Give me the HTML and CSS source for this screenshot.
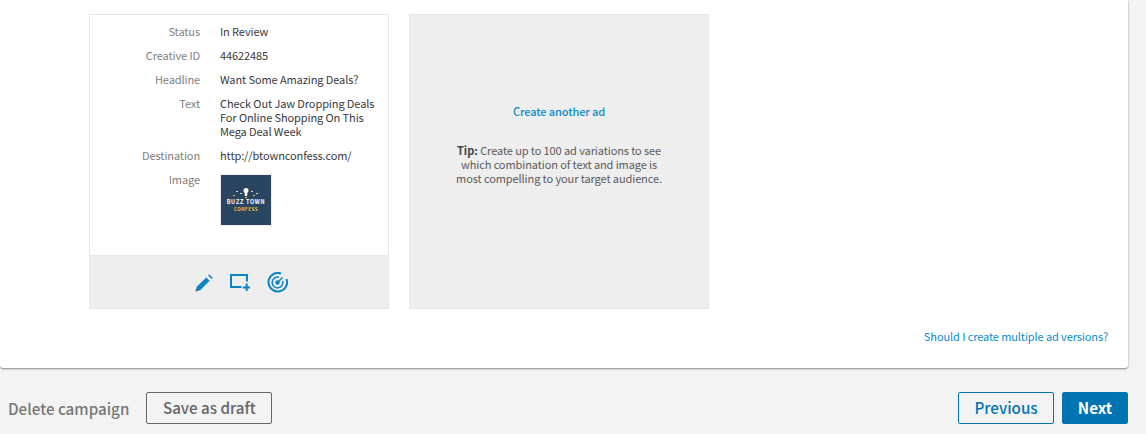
FILE: index.html
```html
<!DOCTYPE html>
<html lang="en">
<head>
<meta charset="utf-8">
<title>Ad versions</title>
<link rel="stylesheet" href="styles.css">
</head>
<body>
<main class="panel">
  <div class="cards">
    <section class="ad-card">
      <dl class="details">
        <div class="row"><dt>Status</dt><dd>In Review</dd></div>
        <div class="row"><dt>Creative ID</dt><dd>44622485</dd></div>
        <div class="row"><dt>Headline</dt><dd>Want Some Amazing Deals?</dd></div>
        <div class="row"><dt>Text</dt><dd>Check Out Jaw Dropping Deals For Online Shopping On This Mega Deal Week</dd></div>
        <div class="row"><dt>Destination</dt><dd>http://btownconfess.com/</dd></div>
        <div class="row"><dt>Image</dt><dd>
          <div class="thumb">
            <svg class="bulb" width="36" height="11" viewBox="0 0 36 11" aria-hidden="true">
              <path d="M18 0a2.500 2.500 0 0 1 2.500 2.500c0 1.300-1 2-1.300 3V8h-2.400V5.500c-.3-1-1.300-1.700-1.300-3A2.500 2.500 0 0 1 18 0z" fill="#fff"/>
              <rect x="8" y="3" width="2" height="1" fill="#cfd8e0"/>
              <rect x="12" y="5" width="2" height="1" fill="#cfd8e0"/>
              <rect x="23" y="3" width="2" height="1" fill="#cfd8e0"/>
              <rect x="28" y="5" width="2" height="1" fill="#cfd8e0"/>
              <rect x="5" y="7" width="2" height="1" fill="#e8c33a"/>
              <rect x="25" y="7" width="2" height="1" fill="#e8c33a"/>
              <rect x="17" y="9" width="2" height="1" fill="#e8c33a"/>
            </svg>
            <span class="thumb-title">BUZZ TOWN</span>
            <span class="thumb-sub">CONFESS</span>
          </div>
        </dd></div>
      </dl>
      <div class="actions">
        <svg class="icon" width="18" height="18" viewBox="0 0 18 18" aria-hidden="true">
          <path d="M0.500 17.500l1.200-4.700L11.300 3.400l3.300 3.300-9.400 9.600z" fill="#0c84c4"/>
          <path d="M13 1.200L14.200.3l3.500 3.400-1 1.300z" fill="#0c84c4"/>
          <path d="M0.500 17.500l.7-2.700 2 2z" fill="#6b5f6b"/>
        </svg>
        <svg class="icon" width="20" height="17" viewBox="0 0 20 17" aria-hidden="true">
          <path d="M11.500 13H1V1h16v6.500" fill="none" stroke="#0c84c4" stroke-width="2"/>
          <path d="M15.700 9.500h2v3h3v2h-3v2.500h-2v-2.500h-3v-2h3z" fill="#0c84c4"/>
        </svg>
        <svg class="icon" width="21" height="21" viewBox="0 0 21 21" aria-hidden="true">
          <path d="M14 1.500A9.300 9.300 0 1 0 19.500 7" fill="none" stroke="#0c84c4" stroke-width="2"/>
          <path d="M12 5.300A5.400 5.400 0 1 0 15.700 9" fill="none" stroke="#0c84c4" stroke-width="1.500"/>
          <circle cx="10.500" cy="10.500" r="2.200" fill="#0c84c4"/>
          <path d="M10.500 10.500l5-5" stroke="#0c84c4" stroke-width="1.500"/>
        </svg>
      </div>
    </section>
    <section class="add-card">
      <a class="add-link" href="#">Create another ad</a>
      <p class="tip"><strong>Tip:</strong> Create up to 100 ad variations to see which combination of text and image is most compelling to your target audience.</p>
    </section>
  </div>
  <div class="help"><a href="#">Should I create multiple ad versions?</a></div>
</main>
<footer class="footer">
  <div class="footer-group">
    <a class="delete" href="#">Delete campaign</a>
    <button class="btn btn-draft" type="button">Save as draft</button>
  </div>
  <div class="footer-group footer-right">
    <button class="btn btn-prev" type="button">Previous</button>
    <button class="btn btn-next" type="button">Next</button>
  </div>
</footer>
</body>
</html>
```
FILE: styles.css
```css
* { box-sizing: border-box; }
html, body { height: 100%; }
body {
  margin: 0;
  background: #f3f3f3;
  font-family: "Noto Sans CJK SC", "Source Sans Pro", "Open Sans", sans-serif;
  color: #333;
  overflow: hidden;
}
a { text-decoration: none; }
.panel {
  width: 1128px;
  height: 368px;
  background: #fff;
  border-radius: 0 0 3px 3px;
  box-shadow: 0 1px 2px rgba(0,0,0,.45);
  padding: 14px 20px 0 89px;
  display: flex;
  flex-direction: column;
}
.cards { display: flex; gap: 20px; }
.ad-card, .add-card {
  width: 300px;
  height: 295px;
  border: 1px solid #e6e9ec;
}
.ad-card { display: flex; flex-direction: column; }
.details { margin: 0; padding: 4px 0 0; flex: 1; font-size: 11px; letter-spacing: -.1px; line-height: 14px; }
.row { display: flex; padding: 5px 0; }
.row dt { width: 110px; text-align: right; color: #808080; }
.row dd { margin: 0 0 0 20px; width: 160px; color: #3a3a3a; }
.thumb {
  width: 50px;
  height: 50px;
  margin-top: 3px;
  margin-left: 1px;
  background: #2a4560;
  box-shadow: 0 0 0 1px #eee;
  display: flex;
  flex-direction: column;
  align-items: center;
  padding-top: 13px;
  line-height: 6px;
  letter-spacing: 0;
}
.bulb { display: block; margin-bottom: 0; }
.thumb-title { font-size: 5.500px; font-weight: 700; color: #fff; letter-spacing: .7px; white-space: nowrap; }
.thumb-sub { font-size: 4.500px; font-weight: 700; color: #ecc931; letter-spacing: .5px; margin-top: 1px; }
.actions {
  height: 53px;
  background: #eee;
  border-top: 1px solid #e6e9ec;
  display: flex;
  justify-content: center;
  align-items: center;
  gap: 17px;
  padding: 1px 0 0 4px;
}
.icon { display: block; }
.add-card {
  background: #eee;
  text-align: center;
  font-size: 11px;
  letter-spacing: -.1px;
  line-height: 14px;
  padding-top: 89px;
  display: flex;
  flex-direction: column;
  align-items: center;
}
.add-link { color: #0a8ccc; font-weight: 500; }
.tip { margin: 25px 0 0; width: 210px; color: #5a5a5a; }
.tip strong { font-weight: 700; color: #444; letter-spacing: 0; }
.help { margin-top: 20px; text-align: right; font-size: 11px; letter-spacing: -.1px; line-height: 14px; }
.help a { color: #0a8ccc; }
.footer {
  width: 1128px;
  display: flex;
  justify-content: space-between;
  align-items: center;
  padding: 24px 0 0 8px;
}
.footer-group { display: flex; align-items: center; gap: 17px; }
.footer-right { gap: 8px; }
.delete { color: #777; font-size: 15.200px; font-weight: 500; line-height: 20px; padding-bottom: 1px; }
.btn {
  height: 32px;
  border-radius: 2px;
  font-family: inherit;
  font-size: 15.200px;
  font-weight: 500;
  line-height: 20px;
  padding: 0 0 2px;
  background: transparent;
}
.btn-draft { width: 126px; border: 1px solid #666; color: #666; }
.btn-prev { width: 96px; border: 1px solid #0073b1; color: #0073b1; }
.btn-next { width: 66px; border: 1px solid #0073b1; background: #0073b1; color: #fff; font-weight: 700; }
```
